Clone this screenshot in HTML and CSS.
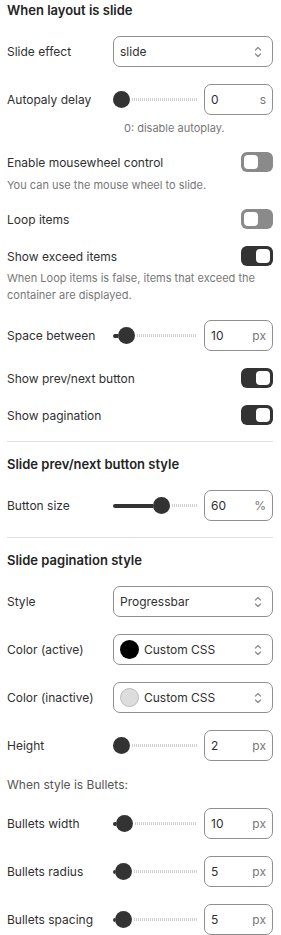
FILE: index.html
```html
<!DOCTYPE html>
<html lang="en">
<head>
    <meta charset="UTF-8">
    <meta name="viewport" content="width=device-width, initial-scale=1.0">
    <title>Slide settings</title>
    <link rel="stylesheet" href="styles.css">
</head>
<body>
    <h2 class="section-title">When layout is slide</h2>

    <div class="field">
        <span class="field-label">Slide effect</span>
        <div class="select">
            <span class="select-text">slide</span>
            <svg class="chevrons" width="8" height="14" viewBox="0 0 8 14"><path d="M1.5 5L4 2.5L6.5 5M1.5 9L4 11.5L6.5 9"/></svg>
        </div>
    </div>

    <div class="field">
        <span class="field-label">Autopaly delay</span>
        <div class="slider">
            <span class="slider-fill" style="width: 0px"></span>
            <span class="slider-thumb"></span>
            <span class="slider-rest"></span>
        </div>
        <div class="number"><span>0</span><span class="unit">s</span></div>
    </div>
    <p class="hint hint-indent">0: disable autoplay.</p>

    <div class="switch-row">
        <span>Enable mousewheel control</span>
        <span class="switch"><span class="switch-knob"></span></span>
    </div>
    <p class="hint">You can use the mouse wheel to slide.</p>

    <div class="switch-row">
        <span>Loop items</span>
        <span class="switch"><span class="switch-knob"></span></span>
    </div>

    <div class="switch-row">
        <span>Show exceed items</span>
        <span class="switch on"><span class="switch-knob"></span></span>
    </div>
    <p class="hint hint-tight">When Loop items is false, items that exceed the container are displayed.</p>

    <div class="field">
        <span class="field-label">Space between</span>
        <div class="slider">
            <span class="slider-fill" style="width: 5px"></span>
            <span class="slider-thumb"></span>
            <span class="slider-rest"></span>
        </div>
        <div class="number"><span>10</span><span class="unit">px</span></div>
    </div>

    <div class="switch-row">
        <span>Show prev/next button</span>
        <span class="switch on"><span class="switch-knob"></span></span>
    </div>

    <div class="switch-row">
        <span>Show pagination</span>
        <span class="switch on"><span class="switch-knob"></span></span>
    </div>

    <hr class="divider">

    <h2 class="section-title">Slide prev/next button style</h2>

    <div class="field">
        <span class="field-label">Button size</span>
        <div class="slider">
            <span class="slider-fill" style="width: 40px"></span>
            <span class="slider-thumb"></span>
            <span class="slider-rest"></span>
        </div>
        <div class="number"><span>60</span><span class="unit">%</span></div>
    </div>

    <hr class="divider">

    <h2 class="section-title">Slide pagination style</h2>

    <div class="field">
        <span class="field-label">Style</span>
        <div class="select">
            <span class="select-text">Progressbar</span>
            <svg class="chevrons" width="8" height="14" viewBox="0 0 8 14"><path d="M1.5 5L4 2.5L6.5 5M1.5 9L4 11.5L6.5 9"/></svg>
        </div>
    </div>

    <div class="field">
        <span class="field-label">Color (active)</span>
        <div class="select">
            <span class="swatch swatch-black"></span>
            <span class="select-text">Custom CSS</span>
            <svg class="chevrons" width="8" height="14" viewBox="0 0 8 14"><path d="M1.5 5L4 2.5L6.5 5M1.5 9L4 11.5L6.5 9"/></svg>
        </div>
    </div>

    <div class="field">
        <span class="field-label">Color (inactive)</span>
        <div class="select">
            <span class="swatch swatch-light"></span>
            <span class="select-text">Custom CSS</span>
            <svg class="chevrons" width="8" height="14" viewBox="0 0 8 14"><path d="M1.5 5L4 2.5L6.5 5M1.5 9L4 11.5L6.5 9"/></svg>
        </div>
    </div>

    <div class="field">
        <span class="field-label">Height</span>
        <div class="slider">
            <span class="slider-fill" style="width: 0px"></span>
            <span class="slider-thumb"></span>
            <span class="slider-rest"></span>
        </div>
        <div class="number"><span>2</span><span class="unit">px</span></div>
    </div>

    <p class="note">When style is Bullets:</p>

    <div class="field field-after-note">
        <span class="field-label">Bullets width</span>
        <div class="slider">
            <span class="slider-fill" style="width: 3px"></span>
            <span class="slider-thumb"></span>
            <span class="slider-rest"></span>
        </div>
        <div class="number"><span>10</span><span class="unit">px</span></div>
    </div>

    <div class="field">
        <span class="field-label">Bullets radius</span>
        <div class="slider">
            <span class="slider-fill" style="width: 2px"></span>
            <span class="slider-thumb"></span>
            <span class="slider-rest"></span>
        </div>
        <div class="number"><span>5</span><span class="unit">px</span></div>
    </div>

    <div class="field">
        <span class="field-label">Bullets spacing</span>
        <div class="slider">
            <span class="slider-fill" style="width: 2px"></span>
            <span class="slider-thumb"></span>
            <span class="slider-rest"></span>
        </div>
        <div class="number"><span>5</span><span class="unit">px</span></div>
    </div>
</body>
</html>
```

FILE: styles.css
```css
:root {
    --text-color: #303030;
    --muted-color: #777;
    --border-color: #8f8f8f;
    --dark: #333;
    --radius: 7px;
}

body {
    margin: 0;
    padding: 0 8px 0 7px;
    font-family: Inter, 'Noto Sans', sans-serif;
    font-size: 12px;
    color: var(--text-color);
    background-color: #fff;
}

.section-title {
    margin: 0;
    font-size: 13px;
    font-weight: 600;
    line-height: 20px;
    color: #242424;
}

.divider {
    border: 0;
    border-top: 1px solid #e2e2e2;
    margin: 16px 0 12px;
}

/* rows with a control on the right */
.field {
    display: flex;
    align-items: center;
    height: 31px;
    margin-top: 16px;
}

.field + .field {
    margin-top: 17px;
}

.field-label {
    width: 106px;
    flex: none;
}

.select {
    flex: 1;
    height: 31px;
    box-sizing: border-box;
    border: 1px solid var(--border-color);
    border-radius: var(--radius);
    display: flex;
    align-items: center;
    gap: 5px;
    padding: 0 10px 0 6px;
}

.select-text {
    flex: 1;
}

.chevrons {
    fill: none;
    stroke: #8a8a8a;
    stroke-width: 1.2;
    stroke-linecap: round;
    stroke-linejoin: round;
}

.swatch {
    width: 19px;
    height: 19px;
    border-radius: 50%;
    box-sizing: border-box;
    flex: none;
}

.swatch-black {
    background-color: #000;
}

.swatch-light {
    background-color: #ddd;
    border: 1px solid #bdbdbd;
}

/* slider */
.slider {
    flex: 1;
    display: flex;
    align-items: center;
    height: 17px;
}

.slider-fill {
    height: 4px;
    background-color: var(--dark);
    border-radius: 2px 0 0 2px;
    flex: none;
}

.slider-thumb {
    width: 17px;
    height: 17px;
    border-radius: 50%;
    background-color: var(--dark);
    flex: none;
}

.slider-rest {
    flex: 1;
    height: 3px;
    margin-left: 2px;
    background: repeating-linear-gradient(90deg, #d0d0d0 0 1px, transparent 1px 2px);
}

.number {
    width: 69px;
    height: 31px;
    box-sizing: border-box;
    margin-left: 7px;
    border: 1px solid var(--border-color);
    border-radius: var(--radius);
    display: flex;
    align-items: center;
    justify-content: space-between;
    padding: 0 6px 0 6px;
}

.unit {
    color: var(--muted-color);
}

/* switch rows */
.switch-row {
    display: flex;
    justify-content: space-between;
    align-items: center;
    height: 20px;
    margin-top: 17px;
}

.hint + .switch-row {
    margin-top: 15px;
}

.switch-row + .switch-row {
    margin-top: 17px;
}

.switch {
    width: 32px;
    height: 20px;
    box-sizing: border-box;
    padding: 3px;
    border-radius: 6px;
    background-color: #8a8a8a;
    display: flex;
}

.switch.on {
    background-color: var(--dark);
    justify-content: flex-end;
}

.switch-knob {
    width: 14px;
    height: 14px;
    border-radius: 4px;
    background-color: #fff;
}

.hint {
    margin: 5px 0 0;
    font-size: 11px;
    line-height: 17px;
    color: var(--muted-color);
}

.hint-indent {
    padding-left: 117px;
}

.hint-tight {
    margin-top: 4px;
}

.note {
    margin: 15px 0 0;
    line-height: 17px;
    color: #555;
}

.field-after-note {
    margin-top: 15px;
}
```
